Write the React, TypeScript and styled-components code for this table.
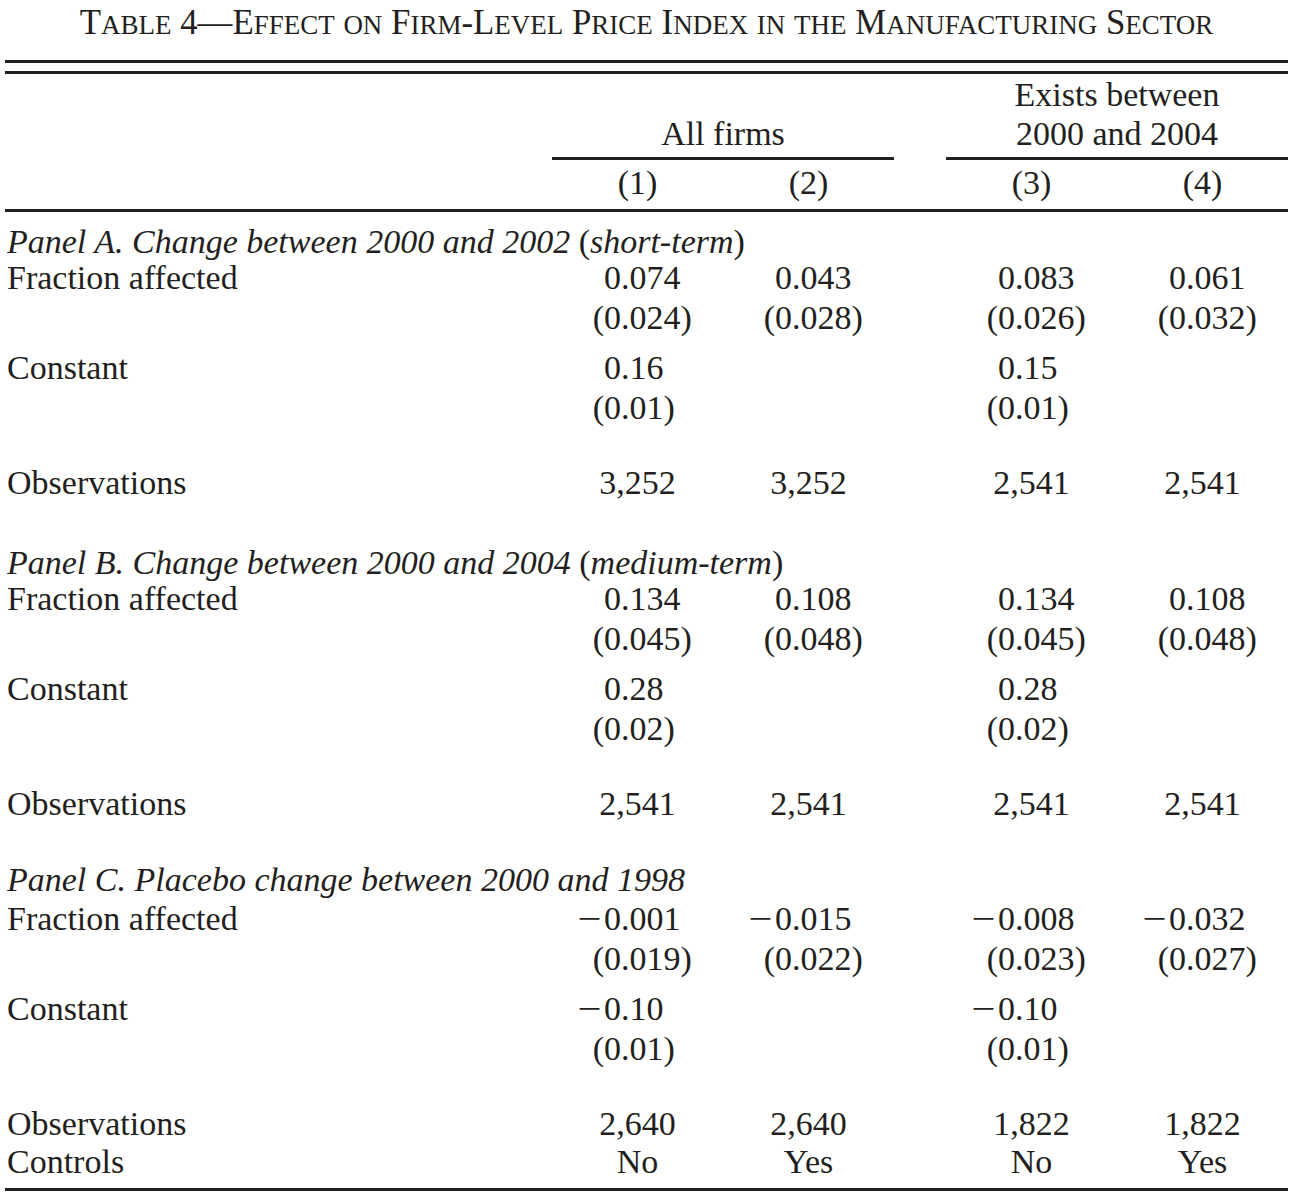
import React from "react";
import styled, { createGlobalStyle } from "styled-components";

const GlobalStyle = createGlobalStyle`
  html, body {
    margin: 0;
    padding: 0;
    background: #ffffff;
  }
  body {
    font-family: "Liberation Serif", "Times New Roman", serif;
    color: #231f20;
  }
`;

const COLS = "547px 171px 171px 52px 171px 171px";

const Page = styled.div`
  width: 1305px;
  box-sizing: border-box;
  padding: 0 17px 0 5px;
  font-size: 34px;
`;

const Title = styled.div`
  height: 46px;
  line-height: 46px;
  margin-bottom: 14px;
  text-align: center;
  font-size: 34.8px;
  white-space: nowrap;
`;

const Small = styled.span`
  font-size: 27px;
`;

const Rule = styled.div<{ $mt?: number }>`
  height: 3px;
  background: #231f20;
  margin-top: ${({ $mt }) => $mt ?? 0}px;
`;

const Row = styled.div<{ $lh?: number; $mt?: number }>`
  display: grid;
  grid-template-columns: ${COLS};
  line-height: ${({ $lh }) => $lh ?? 40}px;
  margin-top: ${({ $mt }) => $mt ?? 0}px;
  white-space: nowrap;

  & > :nth-child(4) {
    grid-column-start: 5;
  }
`;

const GroupRow = styled.div<{ $lh?: number; $mt?: number }>`
  display: grid;
  grid-template-columns: ${COLS};
  line-height: ${({ $lh }) => $lh ?? 39}px;
  margin-top: ${({ $mt }) => $mt ?? 0}px;
`;

const GroupLabel = styled.div<{ $start: number }>`
  grid-column: ${({ $start }) => $start} / span 2;
  display: flex;
  flex-direction: column;
  justify-content: flex-end;
  align-items: center;
  text-align: center;
`;

const GroupRule = styled.div<{ $start: number }>`
  grid-column: ${({ $start }) => $start} / span 2;
  height: 3px;
  background: #231f20;
`;

const Label = styled.div`
  padding-left: 2px;
`;

const Centered = styled.div`
  text-align: center;
`;

const NumCell = styled.div`
  padding-left: 52px;
  text-align: left;
`;

// hanging sign / parenthesis so the digits stay aligned
const Lead = styled.span`
  display: inline-block;
  width: 26px;
  margin-left: -26px;
  text-align: right;
`;

const Minus = styled.span`
  display: inline-block;
  width: 26px;
  margin-left: -26px;
  text-align: right;

  span {
    display: inline-block;
    margin-right: 3px;
    transform: scaleX(1.25);
    transform-origin: right center;
  }
`;

const PanelTitle = styled.div<{ $mt: number }>`
  font-style: italic;
  line-height: 32px;
  margin-top: ${({ $mt }) => $mt}px;
  padding-left: 2px;
  white-space: nowrap;
`;

const Upright = styled.span`
  font-style: normal;
`;

const SmallCaps: React.FC<{ text: string }> = ({ text }) => (
  <>
    {text
      .split(/([a-z]+)/)
      .map((part, i) =>
        /^[a-z]+$/.test(part) ? <Small key={i}>{part.toUpperCase()}</Small> : part
      )}
  </>
);

const Num: React.FC<{ value: string }> = ({ value }) => {
  const first = value.charAt(0);
  if (first === "−") {
    return (
      <NumCell>
        <Minus>
          <span>−</span>
        </Minus>
        {value.slice(1)}
      </NumCell>
    );
  }
  if (first === "(") {
    return (
      <NumCell>
        <Lead>(</Lead>
        {value.slice(1)}
      </NumCell>
    );
  }
  return <NumCell>{value}</NumCell>;
};

type Panel = {
  title: React.ReactNode;
  mt: number;
  firstGap: number;
  frac: string[];
  fracSe: string[];
  cons: string[];
  consSe: string[];
  obs: string[];
};

const panels: Panel[] = [
  {
    title: (
      <>
        Panel A. Change between 2000 and 2002 <Upright>(</Upright>short-term
        <Upright>)</Upright>
      </>
    ),
    mt: 14,
    firstGap: 0,
    frac: ["0.074", "0.043", "0.083", "0.061"],
    fracSe: ["(0.024)", "(0.028)", "(0.026)", "(0.032)"],
    cons: ["0.16", "", "0.15", ""],
    consSe: ["(0.01)", "", "(0.01)", ""],
    obs: ["3,252", "3,252", "2,541", "2,541"],
  },
  {
    title: (
      <>
        Panel B. Change between 2000 and 2004 <Upright>(</Upright>medium-term
        <Upright>)</Upright>
      </>
    ),
    mt: 44,
    firstGap: 0,
    frac: ["0.134", "0.108", "0.134", "0.108"],
    fracSe: ["(0.045)", "(0.048)", "(0.045)", "(0.048)"],
    cons: ["0.28", "", "0.28", ""],
    consSe: ["(0.02)", "", "(0.02)", ""],
    obs: ["2,541", "2,541", "2,541", "2,541"],
  },
  {
    title: <>Panel C. Placebo change between 2000 and 1998</>,
    mt: 40,
    firstGap: 3,
    frac: ["−0.001", "−0.015", "−0.008", "−0.032"],
    fracSe: ["(0.019)", "(0.022)", "(0.023)", "(0.027)"],
    cons: ["−0.10", "", "−0.10", ""],
    consSe: ["(0.01)", "", "(0.01)", ""],
    obs: ["2,640", "2,640", "1,822", "1,822"],
  },
];

const NumRow: React.FC<{ label?: string; values: string[]; mt?: number }> = ({
  label,
  values,
  mt,
}) => (
  <Row $mt={mt}>
    <Label>{label}</Label>
    {values.map((v, i) => (
      <Num key={i} value={v} />
    ))}
  </Row>
);

const TextRow: React.FC<{
  label: string;
  values: string[];
  mt?: number;
  lh?: number;
}> = ({ label, values, mt, lh }) => (
  <Row $mt={mt} $lh={lh}>
    <Label>{label}</Label>
    {values.map((v, i) => (
      <Centered key={i}>{v}</Centered>
    ))}
  </Row>
);

export default function App() {
  return (
    <Page>
      <GlobalStyle />
      <Title>
        <SmallCaps text="Table 4—Effect on Firm-Level Price Index in the Manufacturing Sector" />
      </Title>
      <Rule />
      <Rule $mt={8} />

      <GroupRow $mt={1}>
        <GroupLabel $start={2}>All firms</GroupLabel>
        <GroupLabel $start={5}>
          <span>Exists between</span>
          <span>2000 and 2004</span>
        </GroupLabel>
      </GroupRow>
      <GroupRow $mt={4} $lh={3}>
        <GroupRule $start={2} />
        <GroupRule $start={5} />
      </GroupRow>
      <Row $lh={39} $mt={3}>
        <Label />
        <Centered>(1)</Centered>
        <Centered>(2)</Centered>
        <Centered>(3)</Centered>
        <Centered>(4)</Centered>
      </Row>
      <Rule $mt={7} />

      {panels.map((p, i) => (
        <React.Fragment key={i}>
          <PanelTitle $mt={p.mt}>{p.title}</PanelTitle>
          <NumRow label="Fraction affected" values={p.frac} mt={p.firstGap} />
          <NumRow values={p.fracSe} />
          <NumRow label="Constant" values={p.cons} mt={10} />
          <NumRow values={p.consSe} />
          <TextRow label="Observations" values={p.obs} mt={35} />
        </React.Fragment>
      ))}
      <TextRow label="Controls" values={["No", "Yes", "No", "Yes"]} lh={36} />
      <Rule $mt={8} />
    </Page>
  );
}
